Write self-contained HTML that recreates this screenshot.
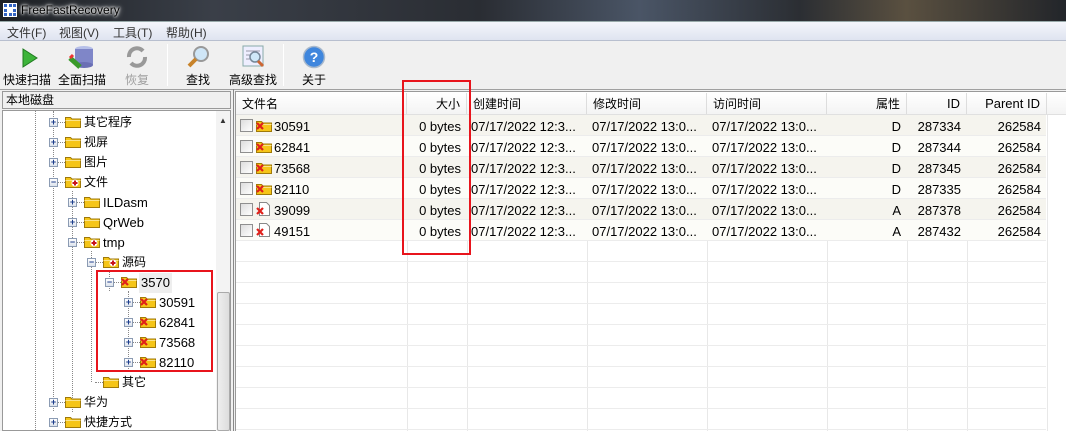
<!DOCTYPE html>
<html><head><meta charset="utf-8"><style>
*{margin:0;padding:0;box-sizing:border-box}
body{width:1066px;height:431px;overflow:hidden;background:#f0f0f0;font-family:"Liberation Sans","Noto Sans CJK SC",sans-serif;font-size:12px;color:#000;position:relative}
.a{position:absolute;white-space:nowrap}
.title{left:0;top:0;width:1066px;height:21px;background:linear-gradient(90deg,#1d2024 0%,#3a3f48 20%,#2a2d33 45%,#4a5566 60%,#2b2e33 75%,#5a5040 85%,#22252a 100%)}
.menu{left:0;top:21px;width:1066px;height:20px;background:linear-gradient(#f4f6fb,#dfe4f0);border-top:1px solid #9aa;border-bottom:1px solid #b8bfcf}
.tl{font-size:12px;top:71px;text-align:center}
.col{top:115px;height:316px;border-left:1px solid #e8e8e8}
.hd{top:93px;height:22px;background:linear-gradient(#fff,#f3f3f3);border-right:1px solid #ddd;line-height:22px;padding:0 6px}
.row{left:236px;width:810px;height:21px;border-bottom:1px solid #ececec}
.c{line-height:23px;font-size:13px}
.tv{font-size:12px;line-height:20px}
.lt{font-size:13px}
.ex{width:9px;height:9px;border:1px solid #8b9bb3;background:linear-gradient(#fff,#dde3ec);font-size:9px;line-height:7px;text-align:center;color:#1c3d8c;font-weight:bold}
.dv{border-left:1px dotted #888;width:0}
.dh{border-top:1px dotted #888;height:0}
</style></head><body>
<div class="a title"></div>
<svg class="a" style="left:3px;top:3px" width="14" height="14"><rect width="14" height="14" fill="#fff"/><g fill="#3465c4"><rect x="1" y="1" width="3" height="3"/><rect x="6" y="1" width="3" height="3"/><rect x="10" y="1" width="3" height="3"/><rect x="1" y="6" width="3" height="3"/><rect x="10" y="6" width="3" height="3"/><rect x="1" y="10" width="3" height="3"/><rect x="6" y="10" width="3" height="3"/><rect x="10" y="10" width="3" height="3"/></g></svg>
<div class="a" style="left:21px;top:3px;font-size:12px;color:#000;text-shadow:0 0 6px #fff,0 0 3px #fff,0 0 2px #fff">FreeFastRecovery</div>
<div class="a menu"></div>
<div class="a" style="left:7px;top:24px;color:#333">文件(F)</div>
<div class="a" style="left:59px;top:24px;color:#333">视图(V)</div>
<div class="a" style="left:113px;top:24px;color:#333">工具(T)</div>
<div class="a" style="left:166px;top:24px;color:#333">帮助(H)</div>
<svg class="a" style="left:18px;top:47px" width="22" height="22"><path d="M5 2 L19 11 L5 20 Z" fill="#3db43a" stroke="#1f7a1f"/></svg>
<svg class="a" style="left:68px;top:44px" width="28" height="26"><ellipse cx="16" cy="5" rx="9" ry="3" fill="#b6bfe8"/><rect x="7" y="5" width="18" height="16" fill="#7f86c8"/><ellipse cx="16" cy="21" rx="9" ry="3" fill="#6a6fb4"/><path d="M2 14 L12 23" stroke="#3a9a2a" stroke-width="5"/><path d="M2 14 L5 11" stroke="#e33" stroke-width="3"/></svg>
<svg class="a" style="left:124px;top:45px" width="26" height="24"><path d="M5 12 A8 8 0 0 1 19 6 M21 12 A8 8 0 0 1 7 18" stroke="#999" stroke-width="4" fill="none"/></svg>
<div class="a" style="left:167px;top:44px;width:1px;height:42px;background:#bbb;border-right:1px solid #fff"></div>
<svg class="a" style="left:186px;top:45px" width="26" height="24"><circle cx="15" cy="9" r="7" fill="#cfe6f7" stroke="#999" stroke-width="2"/><path d="M10 14 L3 21" stroke="#c8832a" stroke-width="4"/></svg>
<svg class="a" style="left:241px;top:44px" width="26" height="26"><rect x="2" y="2" width="20" height="20" fill="#eef" stroke="#8aa"/><path d="M5 7h14M5 11h14M5 15h10" stroke="#99a"/><circle cx="14" cy="13" r="5" fill="#cfe8f8" stroke="#789" stroke-width="1.5"/><path d="M17 17 L22 22" stroke="#c63" stroke-width="3"/></svg>
<div class="a" style="left:283px;top:44px;width:1px;height:42px;background:#bbb;border-right:1px solid #fff"></div>
<svg class="a" style="left:302px;top:45px" width="24" height="24"><circle cx="12" cy="12" r="10.5" fill="#3f86dd" stroke="#a9b9cc" stroke-width="1.5"/><text x="12" y="17" text-anchor="middle" font-size="14" font-weight="bold" fill="#fff" font-family="Liberation Sans">?</text></svg>
<div class="a tl" style="left:3px">快速扫描</div>
<div class="a tl" style="left:58px">全面扫描</div>
<div class="a tl" style="left:125px;color:#a0a0a0">恢复</div>
<div class="a tl" style="left:186px">查找</div>
<div class="a tl" style="left:229px">高级查找</div>
<div class="a tl" style="left:302px">关于</div>
<div class="a" style="left:0;top:89px;width:1066px;height:1px;background:#a0a0a0"></div>
<div class="a" style="left:2px;top:91px;width:229px;height:18px;border:1px solid #999;background:#f0f0f0;padding-left:3px;line-height:16px">本地磁盘</div>
<div class="a" style="left:2px;top:110px;width:229px;height:321px;border:1px solid #999;background:#fff;overflow:hidden" id="tree"></div>
<div class="a" style="left:216px;top:111px;width:14px;height:320px;background:#f3f3f3"></div>
<div class="a" style="left:219px;top:116px;font-size:8px;color:#333">▲</div>
<div class="a" style="left:217px;top:292px;width:13px;height:139px;border:1px solid #aaa;border-radius:2px;background:linear-gradient(90deg,#eee,#ddd)"></div>
<div class="a" style="left:233px;top:89px;width:1px;height:342px;background:#888"></div>
<div class="a" style="left:235px;top:91px;width:831px;height:340px;background:#fff;border-top:1px solid #999;border-left:1px solid #999"></div>
<div class="a hd" style="left:236px;width:171px">文件名</div>
<div class="a hd" style="left:407px;width:60px;text-align:right">大小</div>
<div class="a hd" style="left:467px;width:120px">创建时间</div>
<div class="a hd" style="left:587px;width:120px">修改时间</div>
<div class="a hd" style="left:707px;width:120px">访问时间</div>
<div class="a hd" style="left:827px;width:80px;text-align:right">属性</div>
<div class="a hd lt" style="left:907px;width:60px;text-align:right">ID</div>
<div class="a hd lt" style="left:967px;width:80px;text-align:right">Parent ID</div>
<div class="a hd" style="left:1047px;width:19px;border-right:0"></div>
<div class="a" style="left:236px;top:114px;width:830px;height:1px;background:#e0e0e0"></div>
<div id="rows"></div>
<div class="a" style="left:402px;top:80px;width:69px;height:175px;border:2px solid #e8141c"></div>
<div class="a" style="left:96px;top:270px;width:117px;height:102px;border:2px solid #e8141c"></div>
<script>
var F='<svg width="16" height="13"><path d="M0.5 2.5h5l1.5 1.5h8.5v8.5h-15z" fill="#f5c518" stroke="#a07a08"/><path d="M0.5 5.5h15" stroke="#fbe38a"/>';
function fold(kind){var s=F;if(kind=='x')s+='<path d="M1 4l6 6M7 4l-6 6" stroke="#e0201a" stroke-width="2.2"/>';if(kind=='p')s+='<circle cx="10" cy="8" r="3.5" fill="#fff"/><path d="M10 5.5v5M7.5 8h5" stroke="#c8141c" stroke-width="2"/>';return s+'</svg>';}
function doc(){return '<svg width="16" height="16"><path d="M3.5 1.5h7l3 3v10h-10z" fill="#fff" stroke="#888"/><path d="M1 7l6 6M7 7l-6 6" stroke="#e0201a" stroke-width="2.2"/></svg>';}
var T=document.getElementById('tree'),h='';
var tr=[[52,'其它程序','+',''],[52,'视屏','+',''],[52,'图片','+',''],[52,'文件','-','p'],[71,'ILDasm','+',''],[71,'QrWeb','+',''],[71,'tmp','-','p'],[90,'源码','-','p'],[108,'3570','-','x'],[127,'30591','+','x'],[127,'62841','+','x'],[127,'73568','+','x'],[127,'82110','+','x'],[90,'其它','',''],[52,'华为','+',''],[52,'快捷方式','+','']];
h+='<div class="a dv" style="left:32px;top:0;height:321px"></div>';
h+='<div class="a dv" style="left:50px;top:0;height:300px"></div>';
h+='<div class="a dv" style="left:69px;top:80px;height:221px"></div>';
h+='<div class="a dv" style="left:88px;top:140px;height:131px"></div>';
h+='<div class="a dv" style="left:106px;top:160px;height:20px"></div>';
h+='<div class="a dv" style="left:125px;top:180px;height:80px"></div>';
tr.forEach(function(r,i){var y=i*20+1,x=r[0]-2,cy=y+10;
 var lat=/^[A-Za-z0-9]/.test(r[1]);
 h+='<div class="a dh" style="left:'+(x+4)+'px;top:'+cy+'px;width:10px"></div>';
 if(r[2])h+='<div class="a ex" style="left:'+(x-4)+'px;top:'+(cy-4)+'px">'+(r[2]=='+'?'+':'−')+'</div>';
 h+='<div class="a" style="left:'+(x+12)+'px;top:'+(cy-7)+'px">'+fold(r[3])+'</div>';
 h+='<div class="a tv" style="left:'+(x+31)+'px;top:'+(y+(lat?1:0))+'px;'+(lat?'font-size:13px;':'')+(r[1]=='3570'?'background:#eee;padding:0 2px;left:'+(x+30)+'px':'')+'">'+r[1]+'</div>';});
T.innerHTML=h;
var R=[['30591','12:3','13:0','D','287334',1],['62841','12:3','13:0','D','287344',1],['73568','12:3','13:0','D','287345',1],['82110','12:3','13:0','D','287335',1],['39099','12:3','13:0','A','287378',0],['49151','12:3','13:0','A','287432',0]];
var o='';
[407,467,587,707,827,907,967,1047].forEach(function(x){o+='<div class="a col" style="left:'+x+'px"></div>';});
for(var i=0;i<15;i++){var y=115+i*21;o+='<div class="a row" style="top:'+y+'px;'+(i<6?'background:'+(i%2?'#fcfcf8':'#f5f4ee'):'')+'"></div>';}
R.forEach(function(r,i){var y=115+i*21;
 o+='<div class="a" style="left:240px;top:'+(y+4)+'px;width:13px;height:13px;border:1px solid #8f8f8f;background:linear-gradient(135deg,#ddd,#fff)"></div>';
 o+='<div class="a" style="left:256px;top:'+(y+(r[5]?4:2))+'px">'+(r[5]?fold('x'):doc())+'</div>';
 o+='<div class="a c" style="left:274px;top:'+y+'px">'+r[0]+'</div>';
 o+='<div class="a c" style="left:407px;width:54px;text-align:right;top:'+y+'px">0 bytes</div>';
 o+='<div class="a c" style="left:471px;top:'+y+'px">07/17/2022 12:3...</div>';
 o+='<div class="a c" style="left:592px;top:'+y+'px">07/17/2022 13:0...</div>';
 o+='<div class="a c" style="left:712px;top:'+y+'px">07/17/2022 13:0...</div>';
 o+='<div class="a c" style="left:827px;width:74px;text-align:right;top:'+y+'px">'+r[3]+'</div>';
 o+='<div class="a c" style="left:907px;width:54px;text-align:right;top:'+y+'px">'+r[4]+'</div>';
 o+='<div class="a c" style="left:967px;width:74px;text-align:right;top:'+y+'px">262584</div>';});
document.getElementById('rows').innerHTML=o;
</script>
</body></html>
